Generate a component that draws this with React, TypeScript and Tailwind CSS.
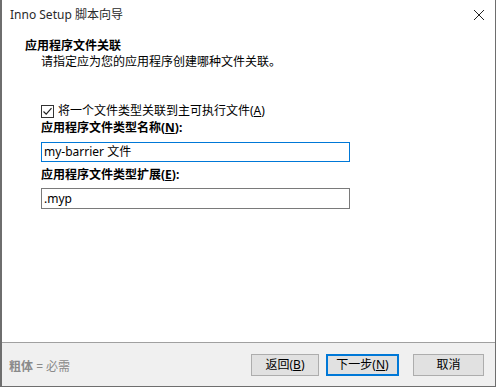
import React from 'react';

export default function App() {
  return (
    <div className="w-[499px] h-[388px] bg-white relative overflow-hidden font-['Noto_Sans','Noto_Sans_CJK_SC',sans-serif] text-[12px] text-black">
      <div className="absolute left-0 top-0 w-[496px] h-[387px] border-l-2 border-r border-b border-[#6e6e6e] flex flex-col">
        {/* Title bar */}
        <div className="h-[30px] flex items-center justify-between pl-[8px] pr-[8px]">
          <span className="text-[12px] text-[#2a2a2a]">Inno Setup 脚本向导</span>
          <svg width="12" height="12" viewBox="0 0 12 12" className="mr-[2px]">
            <path d="M1 1 L11 11 M11 1 L1 11" stroke="#222" strokeWidth="1" />
          </svg>
        </div>

        {/* Header */}
        <div className="pl-[23px] pt-[8px] leading-[16px]">
          <div className="font-bold text-[12px]">应用程序文件关联</div>
          <div className="pl-[16px] text-[12px]">请指定应为您的应用程序创建哪种文件关联。</div>
        </div>

        {/* Body */}
        <div className="flex-1 pl-[39px] pt-[33px]">
          <label className="flex items-center gap-[4px] h-[16px]">
            <span className="w-[13px] h-[13px] border border-[#333] flex items-center justify-center">
              <svg width="11" height="11" viewBox="0 0 11 11">
                <path d="M1.5 5.5 L4.2 8.2 L9.5 2.2" stroke="#222" strokeWidth="1.2" fill="none" />
              </svg>
            </span>
            <span>将一个文件类型关联到主可执行文件(<span className="underline">A</span>)</span>
          </label>
          <div className="font-bold leading-[18px]">
            应用程序文件类型名称(<span className="underline">N</span>):
          </div>
          <div className="mt-[5px] w-[309px] h-[20px] border border-[#0078d7] flex items-center pl-[2px]">
            my-barrier 文件
          </div>
          <div className="font-bold mt-[4px] leading-[18px]">
            应用程序文件类型扩展(<span className="underline">E</span>):
          </div>
          <div className="mt-[4px] w-[309px] h-[21px] border border-[#7a7a7a] flex items-center pl-[2px]">
            .myp
          </div>
        </div>

        {/* Footer */}
        <div className="h-[44px] bg-[#f0f0f0] border-t border-[#a0a0a0] flex items-center justify-between pl-[7px] pr-[11px]">
          <span className="text-[#8a8a8a] pt-[4px]">
            <span className="font-bold">粗体</span> = 必需
          </span>
          <div className="flex items-center gap-[8px]">
            <button className="w-[68px] h-[22px] bg-[#e1e1e1] border border-[#adadad] flex items-center justify-center">
              返回(<span className="underline">B</span>)
            </button>
            <button className="w-[73px] h-[22px] bg-[#e1e1e1] border-2 border-[#0078d7] flex items-center justify-center ml-[-1px]">
              下一步(<span className="underline">N</span>)
            </button>
            <button className="w-[71px] h-[22px] bg-[#e1e1e1] border border-[#adadad] flex items-center justify-center ml-[6px]">
              取消
            </button>
          </div>
        </div>
      </div>
    </div>
  );
}
